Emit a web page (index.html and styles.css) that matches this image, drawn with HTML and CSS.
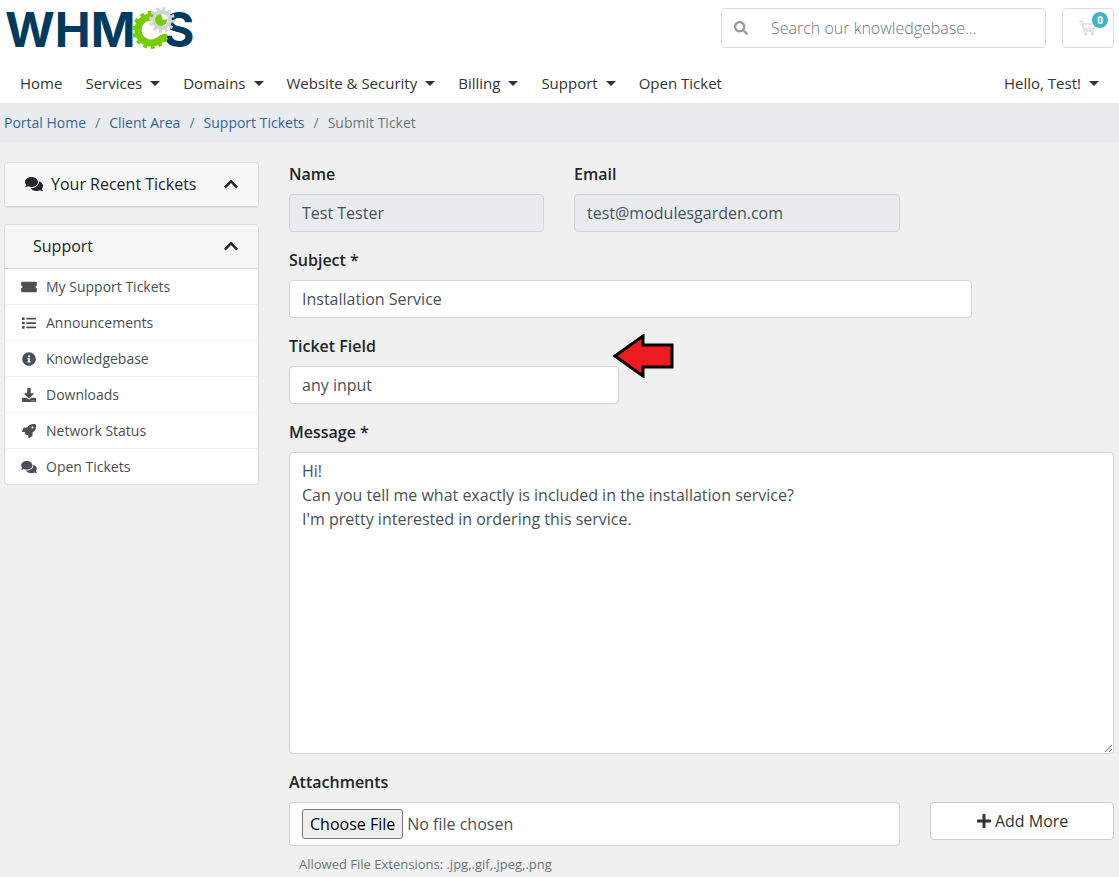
FILE: index.html
```html
<!DOCTYPE html>
<html lang="en">
<head>
<meta charset="utf-8">
<meta name="viewport" content="width=device-width, initial-scale=1">
<title>Submit Ticket - WHMCS</title>
<link rel="stylesheet" href="styles.css">
</head>
<body>
<svg class="sprite" aria-hidden="true">
  <symbol id="i-comments" viewBox="0 0 576 512"><path d="M416 192c0-88.4-93.1-160-208-160S0 103.6 0 192c0 34.3 14.1 65.9 38 92-13.4 30.2-35.5 54.2-35.8 54.5-2.2 2.3-2.8 5.7-1.5 8.7S4.8 352 8 352c36.6 0 66.9-12.3 88.7-25 32.2 15.7 70.3 25 111.3 25 114.9 0 208-71.6 208-160zm122 220c23.9-26 38-57.7 38-92 0-66.9-53.5-124.2-129.3-148.1.9 6.6 1.3 13.3 1.3 20.1 0 105.9-107.7 192-240 192-10.8 0-21.3-.8-31.7-1.9C207.8 439.6 281.8 480 368 480c41 0 79.1-9.2 111.3-25 21.8 12.7 52.1 25 88.7 25 3.2 0 6.1-1.9 7.3-4.8 1.3-2.9.7-6.3-1.5-8.7-.3-.3-22.4-24.2-35.8-54.5z"/></symbol>
  <symbol id="i-ticket" viewBox="0 0 576 512"><path d="M528 256c0 26.5 21.5 48 48 48v96c0 26.5-21.5 48-48 48H48c-26.5 0-48-21.5-48-48v-96c26.5 0 48-21.5 48-48s-21.5-48-48-48v-96c0-26.5 21.5-48 48-48h480c26.5 0 48 21.5 48 48v96c-26.5 0-48 21.5-48 48z"/></symbol>
  <symbol id="i-list" viewBox="0 0 512 512"><path d="M16 48h64q16 0 16 16v64q0 16-16 16H16q-16 0-16-16V64q0-16 16-16zm0 160h64q16 0 16 16v64q0 16-16 16H16q-16 0-16-16v-64q0-16 16-16zm0 160h64q16 0 16 16v64q0 16-16 16H16q-16 0-16-16v-64q0-16 16-16zM176 64h320q16 0 16 16v32q0 16-16 16H176q-16 0-16-16V80q0-16 16-16zm0 160h320q16 0 16 16v32q0 16-16 16H176q-16 0-16-16v-32q0-16 16-16zm0 160h320q16 0 16 16v32q0 16-16 16H176q-16 0-16-16v-32q0-16 16-16z"/></symbol>
  <symbol id="i-info" viewBox="0 0 512 512"><path d="M256 8C119.043 8 8 119.083 8 256c0 136.997 111.043 248 248 248s248-111.003 248-248C504 119.083 392.957 8 256 8zm0 110c23.196 0 42 18.804 42 42s-18.804 42-42 42-42-18.804-42-42 18.804-42 42-42zm56 254c0 6.627-5.373 12-12 12h-88c-6.627 0-12-5.373-12-12v-24c0-6.627 5.373-12 12-12h12v-64h-12c-6.627 0-12-5.373-12-12v-24c0-6.627 5.373-12 12-12h64c6.627 0 12 5.373 12 12v100h12c6.627 0 12 5.373 12 12v24z"/></symbol>
  <symbol id="i-download" viewBox="0 0 512 512"><path d="M216 0h80c13.3 0 24 10.7 24 24v168h87.7c17.8 0 26.7 21.5 14.1 34.1L269.7 378.3c-7.5 7.5-19.8 7.5-27.3 0L90.1 226.1c-12.6-12.6-3.7-34.1 14.1-34.1H192V24c0-13.3 10.7-24 24-24zm296 376v112c0 13.3-10.7 24-24 24H24c-13.3 0-24-10.7-24-24V376c0-13.3 10.7-24 24-24h146.7l49 49c20.1 20.1 52.5 20.1 72.6 0l49-49H488c13.3 0 24 10.7 24 24zm-124 88c0-11-9-20-20-20s-20 9-20 20 9 20 20 20 20-9 20-20zm64 0c0-11-9-20-20-20s-20 9-20 20 9 20 20 20 20-9 20-20z"/></symbol>
  <symbol id="i-rocket" viewBox="0 0 512 512"><path d="M505.12 19.094c-1.19-5.531-6.658-11-12.207-12.188C460.716 0 435.507 0 410.407 0 307.175 0 245.269 55.203 199.052 128H94.838c-16.348.016-35.557 11.875-42.887 26.484L2.516 253.297A28.4 28.4 0 0 0 0 264a24 24 0 0 0 24.006 24h103.81l-22.474 22.469c-11.366 11.361-12.996 32.258 0 45.25l50.904 50.906c11.156 11.188 32.156 13.156 45.277 0l22.475-22.469V488a24 24 0 0 0 24.006 24 28.56 28.56 0 0 0 10.707-2.516l98.728-49.39c14.629-7.297 26.508-26.5 26.508-42.86V312.797c72.597-46.313 128.035-108.406 128.035-211.094.093-25.203.093-50.406-6.862-82.609zM384.04 168a40 40 0 1 1 40.01-40 40.023 40.023 0 0 1-40.01 40z"/></symbol>
  <symbol id="i-search" viewBox="0 0 512 512"><path d="M505 442.7L405.3 343c-4.5-4.5-10.6-7-17-7H372c27.6-35.3 44-79.7 44-128C416 93.1 322.9 0 208 0S0 93.1 0 208s93.1 208 208 208c48.3 0 92.7-16.4 128-44v16.3c0 6.4 2.5 12.5 7 17l99.7 99.7c9.4 9.4 24.6 9.4 33.9 0l28.3-28.3c9.4-9.4 9.4-24.6.1-34zM208 336c-70.7 0-128-57.2-128-128 0-70.7 57.2-128 128-128 70.7 0 128 57.2 128 128 0 70.7-57.2 128-128 128z"/></symbol>
  <symbol id="i-chevron" viewBox="0 0 448 512"><path d="M240.971 130.524l194.343 194.343c9.373 9.373 9.373 24.569 0 33.941l-22.667 22.667c-9.357 9.357-24.522 9.375-33.901.04L224 227.495 69.255 381.516c-9.379 9.335-24.544 9.317-33.901-.04l-22.667-22.667c-9.373-9.373-9.373-24.569 0-33.941L207.03 130.525c9.372-9.373 24.568-9.373 33.941-.001z"/></symbol>
  <symbol id="i-plus" viewBox="0 0 448 512"><path d="M416 208H272V64c0-17.67-14.33-32-32-32h-32c-17.67 0-32 14.33-32 32v144H32c-17.67 0-32 14.33-32 32v32c0 17.67 14.33 32 32 32h144v144c0 17.67 14.33 32 32 32h32c17.67 0 32-14.33 32-32V304h144c17.67 0 32-14.33 32-32v-32c0-17.67-14.33-32-32-32z"/></symbol>
  <symbol id="i-cart" viewBox="0 0 18 16"><path d="M0 1.5h3.2l2 9.5h9.6M3.7 4h13l-1.7 5H4.9" fill="none" stroke="currentColor" stroke-width="1.6" stroke-linejoin="round"/><circle cx="6.5" cy="13.8" r="1.7"/><circle cx="13.5" cy="13.8" r="1.7"/></symbol>
</svg>

<header class="header">
  <div class="topbar">
    <a class="logo" href="#" aria-label="WHMCS">
      <svg width="200" height="60" viewBox="0 0 200 60">
        <text class="logo-text" x="5" y="47">WHM</text>
        <text class="logo-text" x="163" y="47">S</text>
        <circle cx="151" cy="30" r="17" fill="#fff"/>
        <circle cx="151" cy="30" r="13" fill="none" stroke="#7c0" stroke-width="7"/>
        <circle cx="151" cy="30" r="17" fill="none" stroke="#7c0" stroke-width="4" stroke-dasharray="3.815"/>
        <circle cx="156" cy="28" r="9" fill="#fff"/>
        <path d="M156 20h14v14h-10q-4 3-7 1z" fill="#fff"/>
        <path d="M154 39q4 0 6-4h8l-3 7-8 2z" fill="#7c0"/>
        <circle cx="162" cy="20" r="8" fill="#fff" stroke="#d2d4d6" stroke-width="4"/>
        <circle cx="162" cy="20" r="11" fill="none" stroke="#d2d4d6" stroke-width="4" stroke-dasharray="2.88"/>
        <path d="M161 14a6 6 0 1 0 6 5l-4 1z" fill="#7c0"/>
      </svg>
    </a>
    <form class="search" role="search">
      <button class="search-button" type="button" aria-label="Search"><svg class="icon"><use href="#i-search"/></svg></button>
      <input class="search-input" type="text" aria-label="Search our knowledgebase" placeholder="Search our knowledgebase...">
    </form>
    <a class="cart" href="#" aria-label="Shopping cart"><svg class="cart-icon"><use href="#i-cart"/></svg><span class="badge">0</span></a>
  </div>
  <nav class="nav" aria-label="Main">
    <a href="#">Home</a>
    <a class="drop" href="#">Services</a>
    <a class="drop" href="#">Domains</a>
    <a class="drop" href="#">Website &amp; Security</a>
    <a class="drop" href="#">Billing</a>
    <a class="drop" href="#">Support</a>
    <a href="#">Open Ticket</a>
    <a class="drop account" href="#">Hello, Test!</a>
  </nav>
</header>

<nav class="breadcrumb" aria-label="Breadcrumb">
  <ol>
    <li><a href="#">Portal Home</a></li>
    <li><a href="#">Client Area</a></li>
    <li><a href="#">Support Tickets</a></li>
    <li aria-current="page">Submit Ticket</li>
  </ol>
</nav>

<div class="layout">
  <aside class="sidebar">
    <section class="card">
      <h2 class="card-header"><svg class="icon wide"><use href="#i-comments"/></svg>Your Recent Tickets<button class="toggle" type="button" aria-label="Toggle recent tickets"><svg class="icon"><use href="#i-chevron"/></svg></button></h2>
    </section>
    <section class="card">
      <h2 class="card-header plain">Support<button class="toggle" type="button" aria-label="Toggle support menu"><svg class="icon"><use href="#i-chevron"/></svg></button></h2>
      <ul class="menu">
        <li><a href="#"><svg class="icon"><use href="#i-ticket"/></svg>My Support Tickets</a></li>
        <li><a href="#"><svg class="icon"><use href="#i-list"/></svg>Announcements</a></li>
        <li><a href="#"><svg class="icon"><use href="#i-info"/></svg>Knowledgebase</a></li>
        <li><a href="#"><svg class="icon"><use href="#i-download"/></svg>Downloads</a></li>
        <li><a href="#"><svg class="icon"><use href="#i-rocket"/></svg>Network Status</a></li>
        <li><a href="#"><svg class="icon"><use href="#i-comments"/></svg>Open Tickets</a></li>
      </ul>
    </section>
  </aside>

  <main class="main">
    <form class="ticket-form">
      <div class="field span-4">
        <label for="name">Name</label>
        <input class="control" id="name" type="text" value="Test Tester" disabled>
      </div>
      <div class="field span-5">
        <label for="email">Email</label>
        <input class="control" id="email" type="email" value="test@modulesgarden.com" disabled>
      </div>
      <div class="field span-10">
        <label for="subject">Subject *</label>
        <input class="control" id="subject" type="text" value="Installation Service">
      </div>
      <div class="field span-12">
        <label for="custom">Ticket Field</label>
        <input class="control narrow" id="custom" type="text" value="any input">
        <svg class="arrow" width="62" height="44" viewBox="0 0 62 44" aria-hidden="true"><path d="M2 22L30 2v9h29v22H30v9z" fill="#ed1c24" stroke="#000" stroke-width="3"/></svg>
      </div>
      <div class="field span-12">
        <label for="message">Message *</label>
        <textarea class="control" id="message" rows="12">Hi!
Can you tell me what exactly is included in the installation service?
I'm pretty interested in ordering this service.</textarea>
      </div>
      <div class="field span-9">
        <label for="file">Attachments</label>
        <input class="control" id="file" type="file">
        <small class="hint">Allowed File Extensions: .jpg,.gif,.jpeg,.png</small>
      </div>
      <div class="field span-3 add">
        <button class="add-button" type="button"><svg class="icon"><use href="#i-plus"/></svg>Add More</button>
      </div>
    </form>
  </main>
</div>
</body>
</html>
```
FILE: styles.css
```css
* { box-sizing: border-box; }

body {
  margin: 0;
  background: #f0f0f0;
  color: #212529;
  font-family: "Open Sans", "Noto Sans", sans-serif;
  font-size: 16px;
  line-height: 24px;
}

a { text-decoration: none; }
button, input, textarea { font: inherit; }

.sprite { display: none; }
.icon { width: 16px; height: 14px; fill: currentColor; flex: none; }
.icon.wide { width: 18px; height: 16px; }

.header { background: #fff; }
.topbar {
  display: flex;
  align-items: flex-start;
  gap: 16px;
  padding-right: 5px;
}
.logo svg { display: block; }
.logo-text { font-family: Inter, sans-serif; font-size: 48px; font-weight: 700; fill: #003a5d; }

.search {
  display: flex;
  align-items: center;
  width: 325px;
  height: 40px;
  margin: 8px 0 0 auto;
  border: 1px solid #ddd;
  border-radius: 4px;
}
.search-button {
  display: flex;
  padding: 0 10px 0 11px;
  border: 0;
  background: none;
  color: #999;
}
.search-input {
  flex: 1;
  min-width: 0;
  padding: 0 12px;
  border: 0;
  background: none;
  color: #495057;
  font-weight: 300;
}
.search-input::placeholder { color: #6c757d; opacity: 1; }

.cart {
  position: relative;
  display: flex;
  align-items: center;
  justify-content: center;
  width: 52px;
  height: 40px;
  margin-top: 8px;
  border: 1px solid #ddd;
  border-radius: 4px;
  color: #ddd;
}
.cart-icon { width: 18px; height: 16px; fill: currentColor; }
.badge {
  position: absolute;
  top: 3px;
  right: 5px;
  width: 16px;
  height: 16px;
  border-radius: 8px;
  background: #42b3c6;
  color: #fff;
  font-size: 10px;
  font-weight: 700;
  line-height: 16px;
  text-align: center;
}

.nav {
  display: flex;
  gap: 23px;
  padding: 12px 20px 8px;
  font-size: 15px;
}
.nav a { color: #333; line-height: 23px; }
.drop { display: flex; align-items: center; gap: 8px; }
.drop::after {
  content: "";
  border: 5px solid transparent;
  border-top-color: currentColor;
  border-bottom: 0;
}
.account { margin-left: auto; }

.breadcrumb { background: #e8ecef; font-size: 14px; }
.breadcrumb ol {
  display: flex;
  margin: 0;
  padding: 8px 4px;
  line-height: 23px;
  list-style: none;
}
.breadcrumb li { color: #6c757d; }
.breadcrumb li + li::before { content: "/"; padding: 0 9px; }
.breadcrumb a { color: #336699; }

.layout {
  display: grid;
  grid-template-columns: repeat(12, minmax(0, 1fr));
  column-gap: 30px;
  align-items: start;
  padding: 20px 5px 12px 4px;
}
.sidebar { grid-column: span 3; display: grid; gap: 16px; }
.main { grid-column: span 9; }

.card {
  border: 1px solid #ddd;
  border-radius: 4px;
  background: #fff;
  overflow: hidden;
}
.card-header {
  display: flex;
  align-items: center;
  gap: 8px;
  margin: 0;
  padding: 9px 19px 10px 20px;
  border-bottom: 1px solid #d4d4d4;
  background: #f7f7f7;
  font-size: 16px;
  font-weight: 400;
}
.card-header.plain { padding-left: 28px; }
.toggle {
  display: flex;
  margin-left: auto;
  padding: 0;
  border: 0;
  background: none;
  color: inherit;
}
.toggle .icon { height: 16px; }

.menu { margin: 0; padding: 0; list-style: none; font-size: 14px; }
.menu li + li { border-top: 1px solid #efefef; }
.menu a {
  display: flex;
  align-items: center;
  gap: 9px;
  height: 35px;
  padding: 0 16px;
  color: #495057;
}

.ticket-form {
  display: grid;
  grid-template-columns: repeat(12, minmax(0, 1fr));
  gap: 16px 30px;
}
.field { position: relative; }
.span-3 { grid-column: span 3; }
.span-4 { grid-column: span 4; }
.span-5 { grid-column: span 5; }
.span-9 { grid-column: span 9; }
.span-10 { grid-column: 1 / span 10; }
.span-12 { grid-column: 1 / -1; }

.field label { display: block; margin-bottom: 8px; font-weight: 600; }
.control {
  display: block;
  width: 100%;
  padding: 6px 12px;
  border: 1px solid #ced4da;
  border-radius: 4px;
  background: #fff;
  color: #495057;
}
input.control { height: 38px; }
.control:disabled { background: #e8ecef; }
.control.narrow { width: 40%; }
textarea.control { resize: vertical; }
input[type="file"].control { height: 44px; }
.control::file-selector-button {
  height: 30px;
  padding: 1px 7px;
  border: 1px solid #767676;
  border-radius: 3px;
  background: #efefef;
  color: #000;
  font: inherit;
}
.arrow { position: absolute; top: 0; left: 324px; }

.hint { display: block; padding: 8px 10px 0; font-size: 13px; line-height: 20px; color: #6c757d; }
.add { padding-top: 32px; }
.add-button {
  display: flex;
  align-items: center;
  justify-content: center;
  gap: 3px;
  width: 100%;
  height: 38px;
  border: 1px solid #ccc;
  border-radius: 4px;
  background: #fff;
  color: #333;
}
.add-button .icon { height: 16px; }
```
